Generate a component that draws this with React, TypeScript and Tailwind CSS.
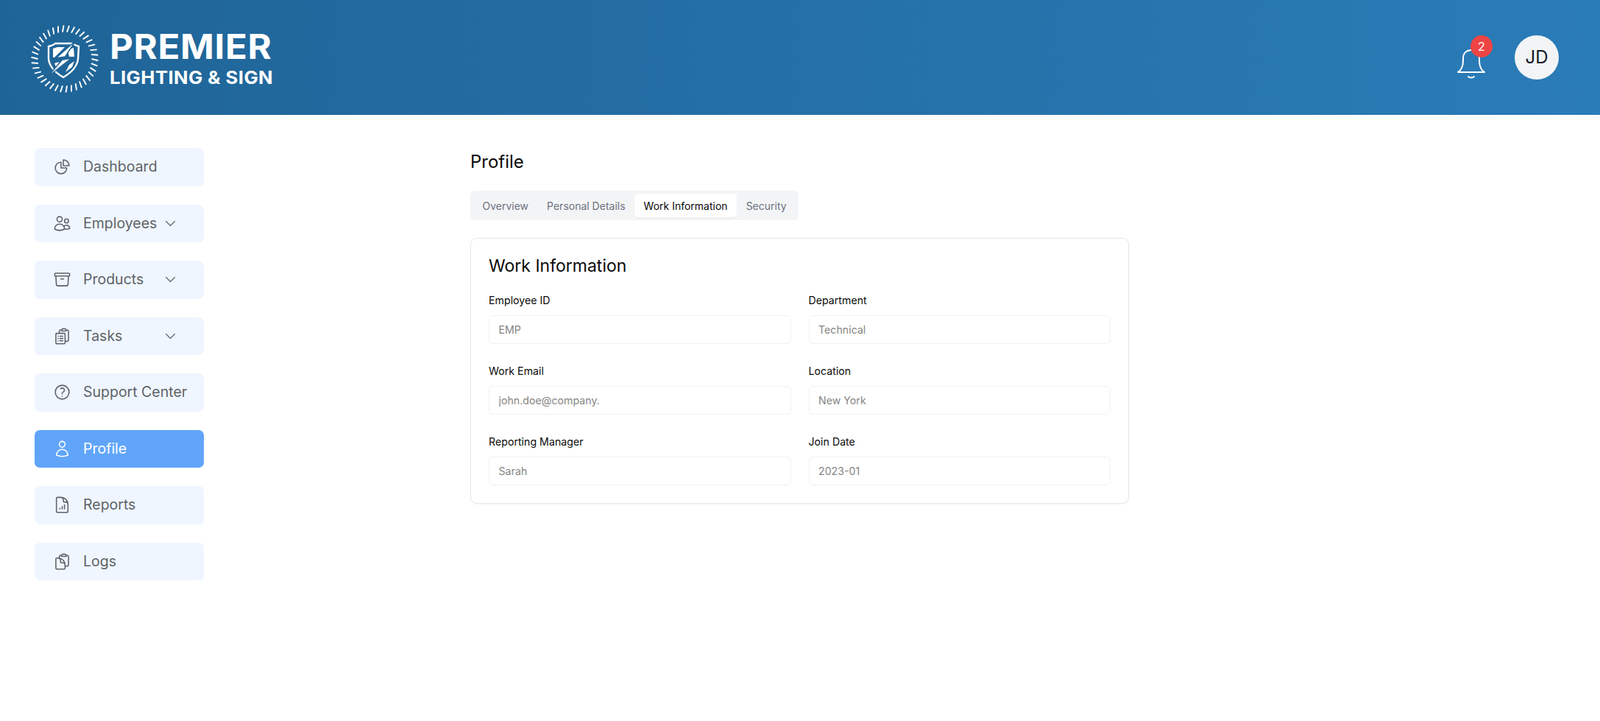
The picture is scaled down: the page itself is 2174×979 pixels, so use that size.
import React from "react";
import {
  HiOutlineChartPie,
  HiOutlineUsers,
  HiOutlineArchiveBox,
  HiOutlineClipboardDocumentList,
  HiOutlineQuestionMarkCircle,
  HiOutlineUser,
  HiOutlineDocumentChartBar,
  HiOutlineClipboardDocument,
  HiOutlineChevronDown,
} from "react-icons/hi2";

const ticks = Array.from({ length: 38 }, (_, i) => {
  const a = (i / 38) * Math.PI * 2;
  const b = a + 0.05;
  return {
    x1: 60 + Math.cos(a) * 36.5,
    y1: 60 + Math.sin(a) * 36.5,
    x2: 60 + Math.cos(b) * 45.5,
    y2: 60 + Math.sin(b) * 45.5,
  };
});

function Logo() {
  return (
    <svg width="120" height="120" viewBox="0 0 120 120" className="shrink-0">
      {ticks.map((t, i) => (
        <line key={i} x1={t.x1} y1={t.y1} x2={t.x2} y2={t.y2} stroke="#fff" strokeWidth="1.9" />
      ))}
      <path
        d="M38 43 C42 42 45 41 47 39 L71 39 C73 41 76 42 79 43 L78 60 C77 71 68 79 58 85 C48 79 39 71 38 60 Z"
        fill="none"
        stroke="#fff"
        strokeWidth="2.4"
      />
      <path d="M44 46 L50 44 L60 44 L46 58 L44 58 Z" fill="#fff" />
      <path d="M64 47 L72 45 L73 57 L66 57 Z" fill="#fff" />
      <path d="M46 66 L52 64 L49 73 Z" fill="#fff" />
      <path d="M73 63 L70 71 L61 78 L66 68 Z" fill="#fff" />
      <path
        d="M75 35 L48 59 L60 57 L36 85 L69 59 L58 61 Z"
        fill="#fff"
        stroke="#1f6498"
        strokeWidth="1.5"
      />
    </svg>
  );
}

function Bell() {
  return (
    <svg width="40" height="48" viewBox="0 0 40 48" fill="none" stroke="#fff" strokeWidth="2" strokeLinecap="round" strokeLinejoin="round">
      <path d="M2 38 C6 36 9 30 9 23 L9 19 C9 12 14 8 20 8 C26 8 31 12 31 19 L31 23 C31 30 34 36 38 38 Z" />
      <path d="M16 44 C18 46 22 46 24 44" />
    </svg>
  );
}

const nav = [
  { label: "Dashboard", Icon: HiOutlineChartPie },
  { label: "Employees", Icon: HiOutlineUsers, chevron: true },
  { label: "Products", Icon: HiOutlineArchiveBox, chevron: true },
  { label: "Tasks", Icon: HiOutlineClipboardDocumentList, chevron: true },
  { label: "Support Center", Icon: HiOutlineQuestionMarkCircle },
  { label: "Profile", Icon: HiOutlineUser, active: true },
  { label: "Reports", Icon: HiOutlineDocumentChartBar },
  { label: "Logs", Icon: HiOutlineClipboardDocument },
];

const fields = [
  ["Employee ID", "EMP"],
  ["Department", "Technical"],
  ["Work Email", "john.doe@company."],
  ["Location", "New York"],
  ["Reporting Manager", "Sarah"],
  ["Join Date", "2023-01"],
];

const tabs = ["Overview", "Personal Details", "Work Information", "Security"];

export default function App() {
  return (
    <div className="min-h-[979px] bg-white font-['Inter',sans-serif] text-[#0a0a0a]">
      <header className="flex h-[156px] items-center justify-between bg-gradient-to-r from-[#1f6497] to-[#2a7cb8] pl-[28px] pr-[56px]">
        <div className="mt-[4px] flex items-center">
          <Logo />
          <div className="ml-[1px] flex flex-col font-bold text-white">
            <span className="origin-left scale-x-[1.07] text-[46px] leading-[46px] tracking-[0.6px]">PREMIER</span>
            <span className="mt-[5px] origin-left scale-x-[1.07] text-[24px] leading-[30px] tracking-[0.4px] whitespace-nowrap">LIGHTING &amp; SIGN</span>
          </div>
        </div>
        <div className="flex items-center gap-[39px]">
          <div className="relative mt-[12px] h-[48px] w-[40px]">
            <Bell />
            <span className="absolute -top-[12px] left-[19px] flex h-[30px] w-[30px] items-center justify-center rounded-full bg-[#ef4444] text-[16px] text-white">2</span>
          </div>
          <div className="flex h-[60px] w-[60px] items-center justify-center rounded-full bg-[#f3f4f6] text-[24px] text-[#111827]">JD</div>
        </div>
      </header>
      <div className="flex">
        <nav className="flex w-[277px] shrink-0 flex-col gap-[25px] pl-[47px] pt-[45px]">
          {nav.map(({ label, Icon, chevron, active }) => (
            <div
              key={label}
              className={
                active
                  ? "flex h-[51.5px] w-[230px] items-center rounded-[7px] bg-[#60a5fa] pl-[25px] text-white"
                  : "flex h-[51.5px] w-[230px] items-center rounded-[7px] bg-[#eff6ff] pl-[25px] text-[#5f6368]"
              }
            >
              <Icon className="h-[25px] w-[25px] shrink-0" />
              <span className="ml-[16px] text-[19.5px] leading-none whitespace-nowrap">{label}</span>
              {chevron && <HiOutlineChevronDown className="ml-auto mr-[36.5px] h-[19px] w-[19px] shrink-0" />}
            </div>
          ))}
        </nav>
        <main className="ml-[362px] w-[895px] pt-[50px]">
          <h1 className="text-[24px] leading-[28px] font-normal">Profile</h1>
          <div className="mt-[25px] inline-flex h-[40px] items-center rounded-[7px] bg-[#f3f4f6] p-[4px]">
            {tabs.map((t) => (
              <div
                key={t}
                className={
                  t === "Work Information"
                    ? "flex h-[32px] items-center rounded-[5px] bg-white px-[12.5px] text-[14px] text-[#0a0a0a] shadow-xs"
                    : "flex h-[32px] items-center px-[12.5px] text-[14px] text-[#6b7280]"
                }
              >
                {t}
              </div>
            ))}
          </div>
          <section className="mt-[24px] rounded-[9px] border border-[#e5e7eb] px-[24px] pt-[23px] pb-[24px] shadow-xs">
            <h2 className="text-[23px] leading-[28px] font-normal">Work Information</h2>
            <div className="mt-[22px] grid grid-cols-2 gap-x-[24px] gap-y-[26px]">
              {fields.map(([label, value]) => (
                <div key={label}>
                  <div className="text-[14.2px] leading-[22px]">{label}</div>
                  <input
                    readOnly
                    value={value}
                    className="mt-[9px] block h-[39px] w-full rounded-[6px] border border-[#f0f1f3] bg-white px-[12.5px] text-[14.2px] text-[#858585] outline-none"
                  />
                </div>
              ))}
            </div>
          </section>
        </main>
      </div>
    </div>
  );
}
